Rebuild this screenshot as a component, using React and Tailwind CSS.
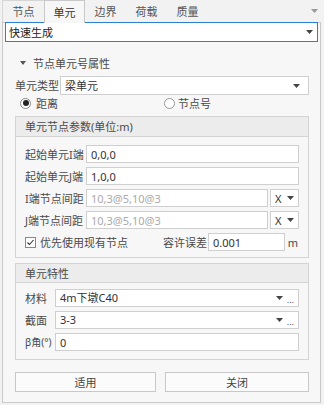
import React from "react";

// small dark caret used in every combo box
const Caret = ({ className = "" }) => (
  <svg width="7" height="4" viewBox="0 0 7 4" className={`shrink-0 ${className}`}>
    <path d="M0 0h7L3.5 4z" fill="#444" />
  </svg>
);

const Combo = ({ value, className = "", dots = false }) => (
  <div
    className={`flex items-center h-[18px] bg-white border border-[#cfcfcf] pl-[4px] pr-[4px] ${className}`}
  >
    <span className="flex-1 truncate leading-[16px] text-[#333]">{value}</span>
    <Caret className="mr-[4px]" />
    {dots && <span className="text-[9px] leading-none text-[#555] -mb-[3px]">...</span>}
  </div>
);

const XCombo = () => (
  <div className="flex items-center justify-between w-[29px] h-[18px] ml-[2px] bg-white border border-[#cfcfcf] pl-[4px] pr-[4px]">
    <span className="text-[#333]">X</span>
    <Caret />
  </div>
);

const Field = ({ value, muted = false, className = "" }) => (
  <div
    className={`flex items-center h-[18px] bg-white border border-[#cfcfcf] px-[4px] ${
      muted ? "text-[#aaa]" : "text-[#333]"
    } ${className}`}
  >
    {value}
  </div>
);

const Tab = ({ label, active }) => (
  <div
    className={`w-[41px] flex items-center justify-center ${
      active
        ? "bg-[#f7f7f7] border-x border-t border-[#c9c9c9] h-[23px] -mb-[1px] relative z-10 text-[#333]"
        : "h-[22px] text-[#555]"
    }`}
  >
    {label}
  </div>
);

const GroupHeader = ({ children, h = "h-[20px]" }) => (
  <div className={`${h} flex items-center pl-[9px] bg-[#ececec] border-b border-[#d4d4d4] text-[#4a4a4a]`}>
    {children}
  </div>
);

export default function App() {
  return (
    <div className="w-[324px] h-[405px] overflow-hidden bg-[#f2f2f2] text-[11px] text-[#4a4a4a] whitespace-nowrap font-['Noto_Sans','Noto_Sans_CJK_SC',sans-serif] leading-none">
      {/* tab strip */}
      <div className="flex items-end h-[22px] pl-[2px]">
        <div className="w-[42px] h-[22px] flex items-center justify-center border-l border-t border-[#d6d6d6] text-[#555]">
          节点
        </div>
        <Tab label="单元" active />
        <Tab label="边界" />
        <Tab label="荷载" />
        <Tab label="质量" />
        <div className="ml-auto mr-[6px] self-center">
          <svg width="7" height="4" viewBox="0 0 7 4">
            <path d="M0 0h7L3.5 4z" fill="#999" />
          </svg>
        </div>
      </div>

      {/* panel */}
      <div className="ml-[2px] w-[319px] h-[381px] bg-[#f7f7f7] border border-[#c9c9c9] px-[2px] flex flex-col">
        <div className="flex items-center h-[20px] bg-white border border-[#2b7fd4] pl-[3px] pr-[4px] -mt-[1px]">
          <span className="flex-1 text-[#222]">快速生成</span>
          <Caret />
        </div>

        <div className="pl-[10px] pr-[9px] flex flex-col">
          {/* section title */}
          <div className="flex items-center h-[16px] mt-[13px] pl-[5px]">
            <svg width="6" height="4" viewBox="0 0 6 4">
              <path d="M0 0h6L3 4z" fill="#555" />
            </svg>
            <span className="ml-[7px]">节点单元号属性</span>
          </div>

          <div className="flex items-center mt-[5px]">
            <span className="w-[45px]">单元类型</span>
            <Combo value="梁单元" className="flex-1 h-[19px]" />
          </div>

          <div className="flex items-center h-[16px]">
            <div className="w-[149px] flex items-center pl-[5px]">
              <span className="w-[11px] h-[11px] rounded-full border border-[#888] bg-white flex items-center justify-center">
                <span className="w-[6px] h-[6px] rounded-full bg-[#222]" />
              </span>
              <span className="ml-[5px]">距离</span>
            </div>
            <span className="w-[11px] h-[11px] rounded-full border border-[#999] bg-white" />
            <span className="ml-[3px]">节点号</span>
          </div>

          {/* group 1 */}
          <div className="mt-[5px] border border-[#d4d4d4] flex flex-col">
            <GroupHeader>单元节点参数(单位:m)</GroupHeader>
            <div className="flex flex-col gap-[4px] pt-[8px] pb-[6px] pl-[9px] pr-[9px]">
              <div className="flex items-center">
                <span className="w-[61px]">起始单元I端</span>
                <Field value="0,0,0" className="flex-1" />
              </div>
              <div className="flex items-center">
                <span className="w-[61px]">起始单元J端</span>
                <Field value="1,0,0" className="flex-1" />
              </div>
              <div className="flex items-center">
                <span className="w-[61px]">I端节点间距</span>
                <Field value="10,3@5,10@3" muted className="flex-1" />
                <XCombo />
              </div>
              <div className="flex items-center">
                <span className="w-[61px]">J端节点间距</span>
                <Field value="10,3@5,10@3" muted className="flex-1" />
                <XCombo />
              </div>
              <div className="flex items-center">
                <div className="w-[138px] shrink-0 flex items-center">
                  <svg width="11" height="11" viewBox="0 0 11 11">
                    <rect x="0.5" y="0.5" width="10" height="10" fill="#fff" stroke="#888" />
                    <path d="M2.5 5.5l2 2 4-4.5" fill="none" stroke="#333" strokeWidth="1.1" />
                  </svg>
                  <span className="ml-[4px]">优先使用现有节点</span>
                </div>
                <span className="w-[45px] shrink-0">容许误差</span>
                <Field value="0.001" className="w-[77px] shrink-0" />
                <span className="w-[13px] shrink-0 text-right">m</span>
              </div>
            </div>
          </div>

          {/* group 2 */}
          <div className="mt-[5px] border border-[#d4d4d4] flex flex-col">
            <GroupHeader h="h-[19px]">单元特性</GroupHeader>
            <div className="flex flex-col gap-[4px] pt-[6px] pb-[8px] pl-[9px] pr-[9px]">
              <div className="flex items-center">
                <span className="w-[30px]">材料</span>
                <Combo value="4m下墩C40" dots className="flex-1" />
              </div>
              <div className="flex items-center">
                <span className="w-[30px]">截面</span>
                <Combo value="3-3" dots className="flex-1" />
              </div>
              <div className="flex items-center">
                <span className="w-[30px] text-[10px]">β角(°)</span>
                <Field value="0" className="flex-1" />
              </div>
            </div>
          </div>

          {/* buttons */}
          <div className="flex gap-[9px] mt-[12px]">
            <button className="w-[141px] h-[20px] bg-[#fbfbfb] border border-[#c8c8c8] text-[#444]">适用</button>
            <button className="flex-1 h-[20px] bg-[#fbfbfb] border border-[#c8c8c8] text-[#444]">关闭</button>
          </div>
        </div>
      </div>
    </div>
  );
}
